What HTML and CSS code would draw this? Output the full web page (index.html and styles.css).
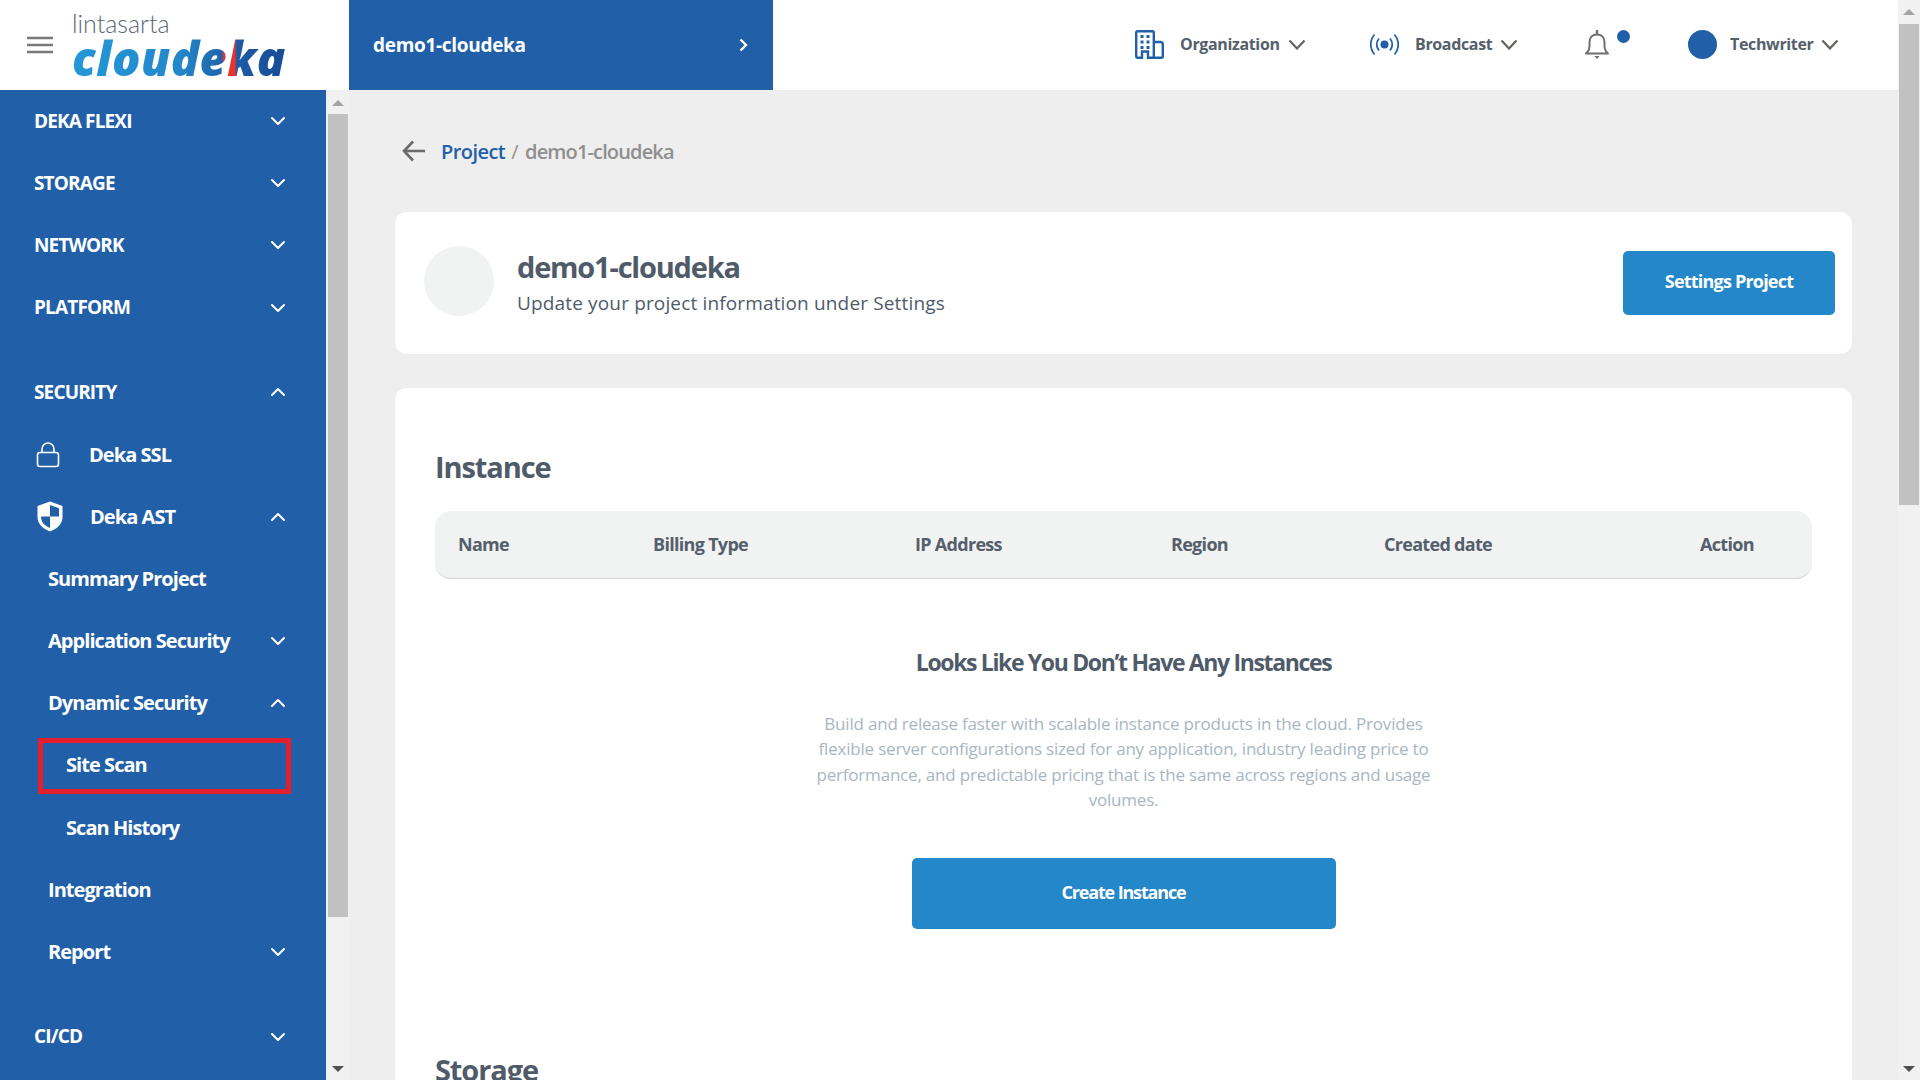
FILE: index.html
```html
<!DOCTYPE html>
<html lang="en">
<head>
    <meta charset="UTF-8">
    <meta name="viewport" content="width=device-width, initial-scale=1.0">
    <title>Cloudeka - demo1-cloudeka</title>
    <link rel="stylesheet" href="styles.css">
</head>
<body>
    <svg class="sprites" aria-hidden="true">
        <symbol id="chev-down" viewBox="0 0 16 10"><path d="M2 2l6 6 6-6" fill="none" stroke="currentColor" stroke-width="2" stroke-linecap="round" stroke-linejoin="round"/></symbol>
        <symbol id="chev-up" viewBox="0 0 16 10"><path d="M2 8l6-6 6 6" fill="none" stroke="currentColor" stroke-width="2" stroke-linecap="round" stroke-linejoin="round"/></symbol>
        <symbol id="nav-chev" viewBox="0 0 18 11"><path d="M1.500 1.500L9 9.500l7.500-8" fill="none" stroke="currentColor" stroke-width="2.200"/></symbol>
    </svg>

    <div class="app">
        <div class="page">
            <!-- Header -->
            <header class="header">
                <div class="brand">
                    <svg class="burger" viewBox="0 0 26 18"><path d="M0 2h26M0 9h26M0 16h26" stroke="#7a7a7a" stroke-width="2.400"/></svg>
                    <div class="logo">
                        <span class="logo-top">lintasarta</span>
                        <span class="logo-main">cloudeka</span>
                    </div>
                </div>
                <div class="project-tab">
                    <span>demo1-cloudeka</span>
                    <svg class="tab-arrow" viewBox="0 0 9 14"><path d="M1.500 1.500L7 7l-5.500 5.500" fill="none" stroke="#fff" stroke-width="2.400"/></svg>
                </div>
                <nav class="top-nav">
                    <div class="top-item org">
                        <svg class="top-icon" viewBox="0 0 29 29">
                            <path d="M1.200 26.500V2.700A1.500 1.500 0 0 1 2.700 1.200h14.600A1.500 1.500 0 0 1 18.800 2.700V27.800H13V21.500H7V27.800H2.700A1.500 1.500 0 0 1 1.200 26.500z" fill="none" stroke="#2160a8" stroke-width="2.400"/>
                            <path d="M19 12h6.500A2.500 2.500 0 0 1 27.800 14.500V26.300a1.500 1.500 0 0 1-1.500 1.500H19" fill="none" stroke="#2160a8" stroke-width="2.400"/>
                            <path d="M5.500 5h3v3h-3zM11.500 5h3v3h-3zM5.500 10.500h3v3h-3zM11.500 10.500h3v3h-3zM5.500 16h3v3h-3zM11.500 16h3v3h-3z" fill="#2160a8"/>
                        </svg>
                        <span>Organization</span>
                        <svg class="nav-chev"><use href="#nav-chev"/></svg>
                    </div>
                    <div class="top-item broadcast">
                        <svg class="top-icon" viewBox="0 0 29 29">
                            <circle cx="14.500" cy="14.500" r="4" fill="#2160a8"/>
                            <path d="M9 8.500c-3 3.500-3 8.500 0 12M20 8.500c3 3.500 3 8.500 0 12" fill="none" stroke="#2160a8" stroke-width="1.800"/>
                            <path d="M4.500 4.500c-5 6-5 14 0 20M24.500 4.500c5 6 5 14 0 20" fill="none" stroke="#2160a8" stroke-width="1.800"/>
                        </svg>
                        <span>Broadcast</span>
                        <svg class="nav-chev"><use href="#nav-chev"/></svg>
                    </div>
                    <div class="top-item bell">
                        <svg class="bell-icon" viewBox="0 0 24 29">
                            <path d="M1 23.500c2.500-2 3.500-4 3.500-8v-3.500C4.500 7.500 7.500 4.500 12 4.500s7.500 3 7.500 7.500v3.500c0 4 1 6 3.500 8z" fill="none" stroke="#6f6f6f" stroke-width="2" stroke-linejoin="round"/>
                            <path d="M12 0v4.500" stroke="#6f6f6f" stroke-width="2.400"/>
                            <path d="M9.500 26h5l-2.500 3z" fill="#6f6f6f"/>
                        </svg>
                        <span class="bell-dot"></span>
                    </div>
                    <div class="top-item user">
                        <span class="user-avatar"></span>
                        <span>Techwriter</span>
                        <svg class="nav-chev"><use href="#nav-chev"/></svg>
                    </div>
                </nav>
            </header>

            <div class="body">
                <!-- Sidebar -->
                <aside class="sidebar">
                    <div class="side-row"><span class="side-label top">DEKA FLEXI</span><svg class="chev"><use href="#chev-down"/></svg></div>
                    <div class="side-row"><span class="side-label top">STORAGE</span><svg class="chev"><use href="#chev-down"/></svg></div>
                    <div class="side-row"><span class="side-label top">NETWORK</span><svg class="chev"><use href="#chev-down"/></svg></div>
                    <div class="side-row"><span class="side-label top">PLATFORM</span><svg class="chev"><use href="#chev-down"/></svg></div>
                    <div class="side-row group-start"><span class="side-label top">SECURITY</span><svg class="chev"><use href="#chev-up"/></svg></div>
                    <div class="side-row">
                        <svg class="side-icon" viewBox="0 0 24 26"><path d="M6 11V7a6 6 0 0 1 12 0v4" fill="none" stroke="#fff" stroke-width="1.600"/><rect x="1.500" y="10.500" width="21" height="14" rx="2.500" fill="none" stroke="#fff" stroke-width="1.600"/></svg>
                        <span class="side-label">Deka SSL</span>
                    </div>
                    <div class="side-row">
                        <svg class="side-icon shield" viewBox="0 0 26 31"><path d="M13 0.500L25.500 5v11c0 7-5 11.500-12.500 14.500C5.500 27.500 0.500 23 0.500 16V5z" fill="#fff"/><path d="M13 4L22 7.300V15.500H13zM13 15.500V27C7.500 24.500 4 21 4 15.500z" fill="#2160a8"/></svg>
                        <span class="side-label">Deka AST</span>
                        <svg class="chev"><use href="#chev-up"/></svg>
                    </div>
                    <div class="side-row sub"><span class="side-label">Summary Project</span></div>
                    <div class="side-row sub"><span class="side-label">Application Security</span><svg class="chev"><use href="#chev-down"/></svg></div>
                    <div class="side-row sub"><span class="side-label">Dynamic Security</span><svg class="chev"><use href="#chev-up"/></svg></div>
                    <div class="side-row subsub"><span class="side-label">Site Scan</span><span class="highlight"></span></div>
                    <div class="side-row subsub"><span class="side-label">Scan History</span></div>
                    <div class="side-row sub"><span class="side-label">Integration</span></div>
                    <div class="side-row sub"><span class="side-label">Report</span><svg class="chev"><use href="#chev-down"/></svg></div>
                    <div class="side-row group-start"><span class="side-label top">CI/CD</span><svg class="chev"><use href="#chev-down"/></svg></div>
                </aside>
                <div class="scrollbar side-scroll">
                    <span class="arrow-up"></span>
                    <span class="thumb"></span>
                    <span class="arrow-down"></span>
                </div>

                <!-- Konten -->
                <main class="main">
                    <div class="breadcrumb">
                        <svg class="back" viewBox="0 0 24 22"><path d="M23 11H2.500M11 1.500L2 11l9 9.500" fill="none" stroke="#6a6a6a" stroke-width="2.600"/></svg>
                        <span class="crumb-link">Project</span>
                        <span class="crumb-sep">/</span>
                        <span class="crumb-current">demo1-cloudeka</span>
                    </div>

                    <section class="card project-card">
                        <div class="project-avatar"></div>
                        <div class="project-info">
                            <h1>demo1-cloudeka</h1>
                            <p>Update your project information under Settings</p>
                        </div>
                        <button class="button settings">Settings Project</button>
                    </section>

                    <section class="card list-card">
                        <h2>Instance</h2>
                        <div class="table-head">
                            <span class="col-name">Name</span>
                            <span class="col-billing">Billing Type</span>
                            <span class="col-ip">IP Address</span>
                            <span class="col-region">Region</span>
                            <span class="col-date">Created date</span>
                            <span class="col-action">Action</span>
                        </div>
                        <div class="empty">
                            <h3>Looks Like You Don’t Have Any Instances</h3>
                            <p>Build and release faster with scalable instance products in the cloud. Provides flexible server configurations sized for any application, industry leading price to performance, and predictable pricing that is the same across regions and usage volumes.</p>
                            <button class="button create">Create Instance</button>
                        </div>
                        <h2 class="storage">Storage</h2>
                    </section>
                </main>
            </div>
        </div>
        <div class="scrollbar page-scroll">
            <span class="arrow-up"></span>
            <span class="thumb"></span>
            <span class="arrow-down"></span>
        </div>
    </div>
</body>
</html>
```

FILE: styles.css
```css
* {
    box-sizing: border-box;
}

body {
    font-family: "Open Sans", "Noto Sans", sans-serif;
    margin: 0;
    padding: 0;
    height: 1080px;
    overflow: hidden;
    background: #eeeeee;
    color: #4f5b69;
}

.sprites {
    display: none;
}

.app {
    display: flex;
    height: 1080px;
}

.page {
    flex: 1;
    min-width: 0;
    display: flex;
    flex-direction: column;
}

/* Header */
.header {
    height: 90px;
    flex-shrink: 0;
    display: flex;
    background: white;
}

.brand {
    width: 349px;
    display: flex;
    align-items: center;
    padding-left: 27px;
}

.burger {
    width: 26px;
    height: 18px;
    margin-right: 19px;
}

.logo {
    display: flex;
    flex-direction: column;
    margin-top: -2px;
}

.logo-top {
    font-family: "Lato", sans-serif;
    font-weight: 300;
    font-size: 25px;
    line-height: 24px;
    margin-bottom: 4px;
    color: #5a6675;
}

.logo-main {
    font-family: "Open Sans", sans-serif;
    font-weight: 800;
    font-style: italic;
    font-size: 47px;
    line-height: 38px;
    letter-spacing: 0.5px;
    background: linear-gradient(90deg, #2497d8 0%, #2388ca 50%, #1f64ac 70%, #e8352c 71%, #e8352c 76%, #1f5aa4 77%, #174c97 100%);
    -webkit-background-clip: text;
    background-clip: text;
    color: transparent;
}

.project-tab {
    width: 424px;
    display: flex;
    align-items: center;
    justify-content: space-between;
    padding: 0 25px 0 24px;
    background: #2160a8;
    color: white;
    font-size: 19px;
    font-weight: 700;
    letter-spacing: -0.3px;
}

.tab-arrow {
    width: 9px;
    height: 14px;
}

.top-nav {
    flex: 1;
    display: flex;
    align-items: center;
    padding: 0 0 2px 362px;
    font-size: 16px;
    font-weight: 700;
    letter-spacing: -0.35px;
    color: #555f6c;
}

.top-item {
    display: flex;
    align-items: center;
}

.top-icon {
    width: 29px;
    height: 29px;
    margin-right: 16px;
}

.nav-chev {
    width: 18px;
    height: 11px;
    margin-left: 8px;
    color: #66625f;
}

.org {
    width: 235px;
}

.broadcast {
    width: 215px;
}

.bell {
    width: 103px;
    align-items: flex-start;
}

.bell-icon {
    width: 24px;
    height: 29px;
}

.bell-dot {
    width: 13px;
    height: 13px;
    margin-left: 8px;
    border-radius: 50%;
    background: #2160a8;
}

.user-avatar {
    width: 29px;
    height: 29px;
    margin-right: 13px;
    border-radius: 50%;
    background: #2160a8;
}

/* Body */
.body {
    flex: 1;
    min-height: 0;
    display: flex;
}

.sidebar {
    width: 326px;
    flex-shrink: 0;
    background: #2160a8;
    color: white;
    overflow: hidden;
}

.side-row {
    position: relative;
    height: 62.2px;
    display: flex;
    align-items: center;
    padding: 0 40px 0 34px;
    font-size: 20px;
    font-weight: 700;
    letter-spacing: -0.95px;
}

.side-row.group-start {
    margin-top: 22.5px;
}

.side-row.sub {
    padding-left: 48px;
}

.side-row.subsub {
    padding-left: 66px;
}

.side-label {
    flex: 1;
    white-space: nowrap;
    margin-top: -1px;
}

.side-label.top {
    font-size: 19px;
    letter-spacing: -0.85px;
}

.side-icon {
    width: 24px;
    height: 26px;
    margin: 0 29px 0 2px;
    flex-shrink: 0;
}

.side-icon.shield {
    width: 26px;
    height: 31px;
    margin: 0 27px 0 3px;
}

.chev {
    width: 16px;
    height: 10px;
    color: white;
    flex-shrink: 0;
}

.highlight {
    position: absolute;
    left: 38px;
    top: 4px;
    width: 253px;
    height: 56px;
    border: 5px solid #e41e2c;
}

/* Scrollbars desenhadas */
.scrollbar {
    width: 22px;
    flex-shrink: 0;
    display: flex;
    flex-direction: column;
    align-items: center;
    background: #f1f1f1;
}

.side-scroll {
    width: 23px;
    padding: 0 1px 0 2px;
}

.arrow-up {
    width: 0;
    height: 0;
    margin: 10px 0 6px;
    border-left: 6px solid transparent;
    border-right: 6px solid transparent;
    border-bottom: 6px solid #a3a3a3;
}

.arrow-down {
    width: 0;
    height: 0;
    margin-top: auto;
    margin-bottom: 8px;
    border-left: 6px solid transparent;
    border-right: 6px solid transparent;
    border-top: 6px solid #505050;
}

.thumb {
    width: 20px;
    background: #c1c1c1;
}

.side-scroll .thumb {
    height: 803px;
    margin-top: 2px;
}

.page-scroll .arrow-up {
    margin: 9px 0 9px;
}

.page-scroll .thumb {
    height: 481px;
}

/* Main */
.main {
    flex: 1;
    min-width: 0;
    overflow: hidden;
    padding: 0 46px 0 46px;
}

.breadcrumb {
    height: 122px;
    display: flex;
    align-items: center;
    padding-left: 7px;
    font-size: 20px;
    letter-spacing: -0.55px;
}

.back {
    width: 24px;
    height: 22px;
    margin-right: 15px;
}

.crumb-link {
    color: #2160a8;
    font-weight: 600;
}

.crumb-sep {
    margin: 0 7px 0 6px;
    color: #8f8f8f;
}

.crumb-current {
    color: #8f8f8f;
    font-weight: 600;
    letter-spacing: -0.85px;
}

.card {
    background: white;
    border-radius: 12px;
}

.project-card {
    height: 142px;
    display: flex;
    align-items: center;
    padding: 0 17px 0 29px;
    margin-bottom: 34px;
}

.project-avatar {
    width: 70px;
    height: 70px;
    margin: -4px 23px 0 0;
    border-radius: 50%;
    background: #f1f2f2;
}

.project-info {
    flex: 1;
    margin-top: -2px;
}

.project-info h1 {
    margin: 0 0 4px;
    font-size: 29px;
    line-height: 38px;
    font-weight: 700;
    letter-spacing: -1.2px;
    color: #4f5b69;
}

.project-info p {
    margin: 0;
    font-size: 19px;
    line-height: 26px;
    letter-spacing: 0.15px;
}

.button {
    font-family: inherit;
    background: #2387c9;
    color: white;
    border: none;
    border-radius: 5px;
    font-size: 18px;
    font-weight: 700;
    padding: 0 0 4px;
}

.settings {
    width: 212px;
    height: 64px;
    letter-spacing: -0.8px;
}

.list-card {
    height: 900px;
    padding: 60px 40px 0;
}

.list-card h2 {
    margin: 0 0 25px;
    font-size: 29px;
    line-height: 38px;
    font-weight: 700;
    letter-spacing: -1.1px;
    color: #4f5b69;
}

.table-head {
    height: 68px;
    display: grid;
    grid-template-columns: 195px 262px 256px 213px 316px 1fr;
    align-items: center;
    padding: 0 0 2px 23px;
    background: #f1f2f2;
    border-bottom: 1px solid #d2d2d2;
    border-radius: 16px;
    font-size: 18px;
    font-weight: 700;
    letter-spacing: -0.7px;
    color: #555f6c;
}

.empty {
    display: flex;
    flex-direction: column;
    align-items: center;
    padding-top: 66px;
}

.empty h3 {
    margin: 0 0 32px;
    font-size: 23px;
    line-height: 34px;
    font-weight: 700;
    letter-spacing: -1.35px;
    color: #4f5b69;
}

.empty p {
    width: 640px;
    margin: 0 0 46px;
    font-size: 17px;
    line-height: 25.3px;
    letter-spacing: -0.2px;
    text-align: center;
    color: #a9b6c2;
}

.create {
    width: 424px;
    height: 71px;
    letter-spacing: -1.15px;
}

.list-card .storage {
    margin: 122px 0 0;
}
```
